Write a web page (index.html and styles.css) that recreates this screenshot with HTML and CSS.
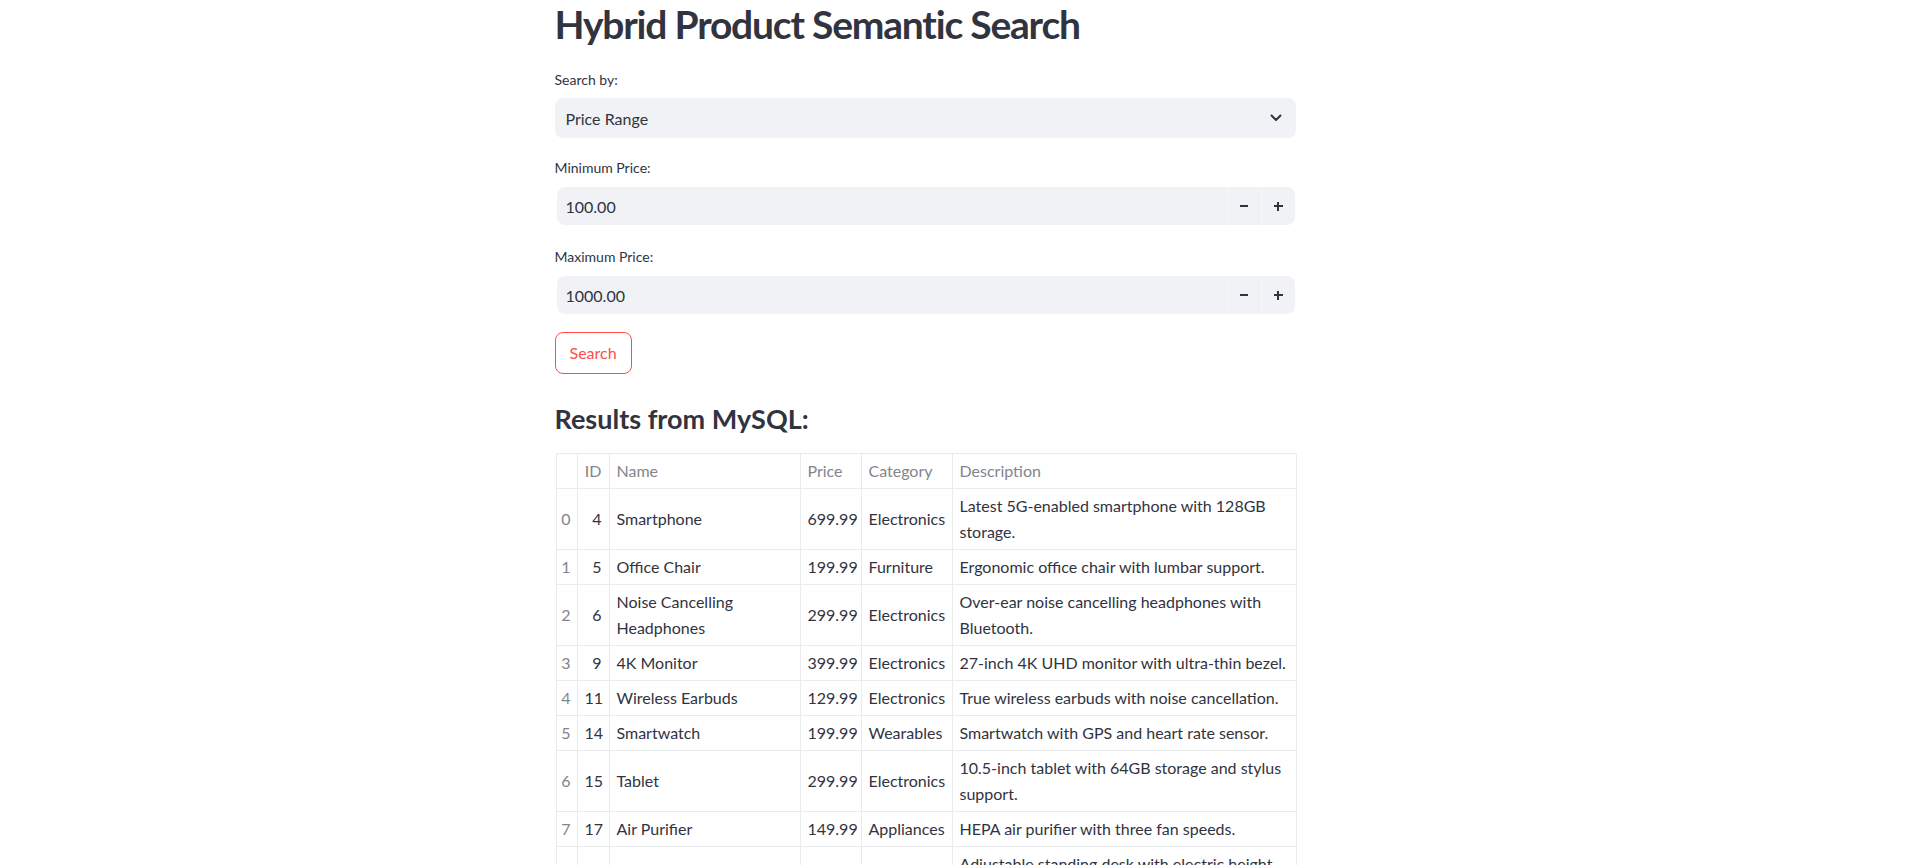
FILE: index.html
```html
<!DOCTYPE html>
<html lang="en">
<head>
<meta charset="utf-8">
<title>Hybrid Product Semantic Search</title>
<link rel="stylesheet" href="styles.css">
</head>
<body>
<div class="app">
  <main class="block">
    <h1 class="title">Hybrid Product Semantic Search</h1>

    <div class="field field-first">
      <div class="label">Search by:</div>
      <div class="select">
        <span class="select-value">Price Range</span>
        <svg class="chevron" width="12" height="8" viewBox="0 0 12 8"><polyline points="1.5,1.5 6,6 10.5,1.5" fill="none" stroke="#31333f" stroke-width="2" stroke-linecap="round" stroke-linejoin="round"/></svg>
      </div>
    </div>

    <div class="field field-num1">
      <div class="label label-num">Minimum Price:</div>
      <div class="number">
        <span class="number-value">100.00</span>
        <span class="step"><span class="minus"></span></span>
        <span class="step"><span class="plus"></span></span>
      </div>
    </div>

    <div class="field field-num2">
      <div class="label label-num">Maximum Price:</div>
      <div class="number">
        <span class="number-value">1000.00</span>
        <span class="step"><span class="minus"></span></span>
        <span class="step"><span class="plus"></span></span>
      </div>
    </div>

    <div class="btn-row"><button class="btn">Search</button></div>

    <h3 class="subtitle">Results from MySQL:</h3>

    <table class="results">
      <colgroup>
        <col class="c-idx"><col class="c-id"><col class="c-name"><col class="c-price"><col class="c-cat"><col class="c-desc">
      </colgroup>
      <thead>
        <tr><th class="idx"></th><th class="num">ID</th><th>Name</th><th>Price</th><th>Category</th><th>Description</th></tr>
      </thead>
      <tbody>
        <tr><th class="idx">0</th><td class="num">4</td><td>Smartphone</td><td>699.99</td><td>Electronics</td><td>Latest 5G-enabled smartphone with 128GB storage.</td></tr>
        <tr><th class="idx">1</th><td class="num">5</td><td>Office Chair</td><td>199.99</td><td>Furniture</td><td>Ergonomic office chair with lumbar support.</td></tr>
        <tr><th class="idx">2</th><td class="num">6</td><td>Noise Cancelling Headphones</td><td>299.99</td><td>Electronics</td><td>Over-ear noise cancelling headphones with Bluetooth.</td></tr>
        <tr><th class="idx">3</th><td class="num">9</td><td>4K Monitor</td><td>399.99</td><td>Electronics</td><td>27-inch 4K UHD monitor with ultra-thin bezel.</td></tr>
        <tr><th class="idx">4</th><td class="num">11</td><td>Wireless Earbuds</td><td>129.99</td><td>Electronics</td><td>True wireless earbuds with noise cancellation.</td></tr>
        <tr><th class="idx">5</th><td class="num">14</td><td>Smartwatch</td><td>199.99</td><td>Wearables</td><td>Smartwatch with GPS and heart rate sensor.</td></tr>
        <tr><th class="idx">6</th><td class="num">15</td><td>Tablet</td><td>299.99</td><td>Electronics</td><td>10.5-inch tablet with 64GB storage and stylus support.</td></tr>
        <tr><th class="idx">7</th><td class="num">17</td><td>Air Purifier</td><td>149.99</td><td>Appliances</td><td>HEPA air purifier with three fan speeds.</td></tr>
        <tr><th class="idx">8</th><td class="num">18</td><td>Standing Desk</td><td>449.99</td><td>Furniture</td><td>Adjustable standing desk with electric height adjustment.</td></tr>
      </tbody>
    </table>
  </main>
</div>
</body>
</html>
```

FILE: styles.css
```css
* { box-sizing: border-box; }

html, body {
  margin: 0;
  padding: 0;
  background: #ffffff;
}

body {
  font-family: "Lato", "Noto Sans", sans-serif;
  color: #31333f;
  font-size: 16px;
}

.app {
  display: flex;
  justify-content: center;
  padding-right: 66px;
}

.block {
  width: 741px;
  display: flex;
  flex-direction: column;
}

.title {
  margin: 0;
  font-size: 39px;
  line-height: 48px;
  letter-spacing: -1.2px;
  font-weight: 700;
  color: #31333f;
}

.field { display: flex; flex-direction: column; }
.field-first { margin-top: 21px; }
.field-num1 { margin-top: 19px; }
.field-num2 { margin-top: 21px; }

.label {
  font-size: 14px;
  line-height: 22px;
  margin-bottom: 7px;
  color: #31333f;
}

.label-num { margin-bottom: 8px; }

.select {
  height: 40px;
  background: #f0f2f6;
  border-radius: 8px;
  display: flex;
  align-items: center;
  justify-content: space-between;
  padding: 0 14px 0 11px;
}

.select-value { font-size: 16px; }

.chevron { display: block; }

.number {
  height: 38px;
  margin: 0 1px 0 2px;
  background: #f0f2f6;
  border-radius: 8px;
  display: flex;
  align-items: stretch;
  overflow: hidden;
}

.number-value {
  flex: 1;
  display: flex;
  align-items: center;
  padding-left: 9px;
  font-size: 16px;
}

.step {
  width: 34px;
  display: flex;
  align-items: center;
  justify-content: center;
  border-left: 1px solid #f6f7fa;
}

.minus {
  width: 8px;
  height: 2px;
  background: #31333f;
}

.plus {
  position: relative;
  width: 9px;
  height: 9px;
}
.plus::before, .plus::after {
  content: "";
  position: absolute;
  background: #31333f;
}
.plus::before { left: 0; right: 0; top: 3.5px; height: 2px; }
.plus::after { top: 0; bottom: 0; left: 3.5px; width: 2px; }

.btn-row { margin-top: 18px; display: flex; }

.btn {
  height: 42px;
  padding: 0 14px;
  background: #ffffff;
  border: 1px solid #ff4b4b;
  border-radius: 8px;
  color: #ff4b4b;
  font-family: inherit;
  font-size: 16px;
  line-height: 1;
}

.subtitle {
  margin: 28px 0 0;
  font-size: 27px;
  line-height: 34px;
  font-weight: 700;
}

.results {
  margin-top: 17px;
  margin-left: 1px;
  width: 740px;
  border-collapse: collapse;
  table-layout: fixed;
  font-size: 16px;
  line-height: 26px;
}

.c-idx { width: 21px; }
.c-id { width: 32px; }
.c-name { width: 191px; }
.c-price { width: 61px; }
.c-cat { width: 91px; }
.c-desc { width: 344px; }

.results th, .results td {
  border: 1px solid #eaebec;
  padding: 4px 7px;
  vertical-align: middle;
  text-align: left;
  font-weight: 400;
}

.results thead th { color: #83858c; }

.results .idx {
  color: #83858c;
  text-align: right;
  padding: 4px 6px 4px 4px;
}

.results .num { text-align: right; }

.results td { color: #31333f; }
```
